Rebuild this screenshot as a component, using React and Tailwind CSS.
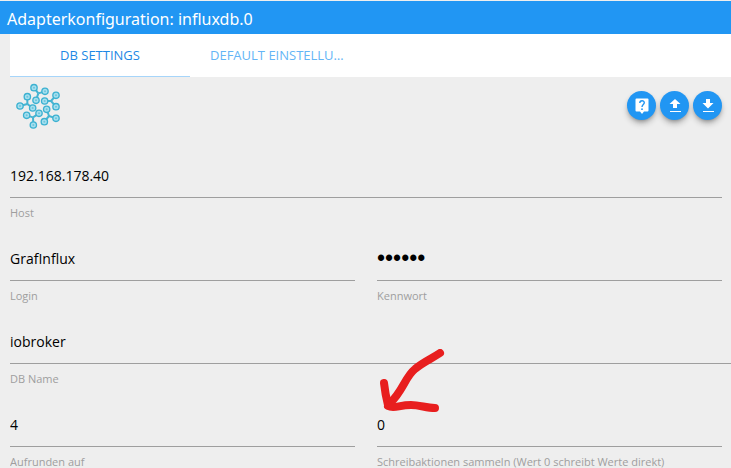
import React, { useState } from 'react';

const LOGO_GROUPS = [
  { center: [115, 52], nodes: [[102, 35], [135, 46], [108, 73]] },
  { center: [153, 75], nodes: [[168, 58], [134, 75], [168, 92]] },
  { center: [147, 120], nodes: [[140, 100], [168, 127], [133, 137]] },
  { center: [99, 124], nodes: [[80, 118], [117, 112], [100, 147]] },
  { center: [82, 84], nodes: [[82, 62], [60, 90], [98, 96]] }
];

const Logo = () => (
  <svg className="ml-1 h-12 w-12" viewBox="42 18 144 144" role="img" aria-label="InfluxDB">
    {LOGO_GROUPS.map(({ center, nodes }) => (
      <g key={center.join()}>
        {nodes.map(([x, y]) => (
          <line key={`${x},${y}`} x1={center[0]} y1={center[1]} x2={x} y2={y} stroke="#45b4d2" strokeWidth={6} />
        ))}
        {nodes.map(([x, y]) => (
          <g key={`${x},${y}`}>
            <circle cx={x} cy={y} r={9.5} fill="#a6dfee" stroke="#3cb1d1" strokeWidth={4} />
            <circle cx={x} cy={y} r={3} fill="#6cc5dc" />
          </g>
        ))}
      </g>
    ))}
  </svg>
);

const RoundButton = ({ label, children }) => (
  <button
    type="button"
    aria-label={label}
    className="flex h-[29px] w-[29px] items-center justify-center rounded-full bg-[#2196f3] text-white shadow-md shadow-black/30 hover:bg-[#42a5f5]"
  >
    {children}
  </button>
);

const Field = ({ id, label, type = 'text', value, className = '', children }) => {
  const [text, setText] = useState(value);

  return (
    <div className={`relative flex flex-col ${className}`}>
      <input
        id={id}
        type={type}
        value={text}
        onChange={(e) => setText(e.target.value)}
        className={`h-11 w-full border-b border-[#9e9e9e] bg-transparent text-black outline-none focus:border-[#2196f3] ${
          type === 'password' ? "font-['Liberation_Sans',sans-serif] text-[23px]" : 'text-sm'
        }`}
      />
      <label htmlFor={id} className="mt-[7px] h-4 truncate text-[11px] leading-4 text-[#9e9e9e]">
        {label}
      </label>
      {children}
    </div>
  );
};

// Red hand-drawn arrow pointing at the field value
const Arrow = () => (
  <svg
    className="pointer-events-none absolute -top-[54px] left-0 h-16 w-18"
    viewBox="0 0 72 64"
    fill="none"
    stroke="#e81e1e"
    strokeWidth={8}
    strokeLinecap="round"
    strokeLinejoin="round"
    aria-hidden="true"
  >
    <path d="M63 4C54 10 46 13 38 20C28 28 26 42 13 54" />
    <path d="M7 34C8 43 9 48 11 56" />
    <path d="M11 57C17 60 22 56 34 56C43 56 49 59 58 59" />
  </svg>
);

const App = () => {
  const [tab, setTab] = useState('db');

  return (
    <div className="h-screen overflow-hidden bg-[#eeeeee] font-['Open_Sans','Noto_Sans',sans-serif]">
      <header className="border-t border-[#eeeeee] bg-[#2196f3] px-[7px]">
        <h1 className="pt-1 font-['Noto_Sans',sans-serif] text-base leading-[29px] text-white">
          Adapterkonfiguration: influxdb.0
        </h1>
      </header>

      <nav className="ml-[10px] flex h-[43px] bg-white text-[13px]" role="tablist">
        <button
          type="button"
          role="tab"
          aria-selected={tab === 'db'}
          onClick={() => setTab('db')}
          className={`w-[180px] truncate border-b px-5 pt-0.5 text-[#1e88e5] ${tab === 'db' ? 'border-[#a6d5fa]' : 'border-white'}`}
        >
          DB SETTINGS
        </button>
        <button
          type="button"
          role="tab"
          aria-selected={tab === 'default'}
          onClick={() => setTab('default')}
          className={`w-[180px] truncate border-b px-5 pt-0.5 text-[#64b5f6] ${tab === 'default' ? 'border-[#a6d5fa]' : 'border-white'}`}
        >
          DEFAULT EINSTELLUNGEN
        </button>
      </nav>

      <main className="pr-[9px] pl-[10px]">
        <div className="flex h-[77px] items-start justify-between pt-[5px]">
          <Logo />
          <div className="mt-[9px] flex gap-1">
            <RoundButton label="Hilfe">
              <svg className="h-[18px] w-[18px]" viewBox="0 0 18 18" fill="none">
                <path d="M3.500 1.500h11a1 1 0 0 1 1 1v11a1 1 0 0 1-1 1h-3.500l-2 2.500-2-2.500h-3.500a1 1 0 0 1-1-1v-11a1 1 0 0 1 1-1z" fill="#fff" />
                <path d="M6.800 6c0-3 4.500-3 4.500-.2C11.300 7.500 9 7.700 9 10" stroke="#2196f3" strokeWidth="1.4" />
                <circle cx="9" cy="12.200" r="0.9" fill="#2196f3" />
              </svg>
            </RoundButton>
            <RoundButton label="Hochladen">
              <svg className="h-[18px] w-[18px]" viewBox="0 0 18 18" fill="currentColor">
                <path d="M7 11h4V7h3.500L9 2 3.500 7H7zM4 14h11v1H4z" />
              </svg>
            </RoundButton>
            <RoundButton label="Herunterladen">
              <svg className="h-[18px] w-[18px]" viewBox="0 0 18 18" fill="currentColor">
                <path d="M14.500 6H11V2H7v4H3.500L9 11.500zM4 14h11v1H4z" />
              </svg>
            </RoundButton>
          </div>
        </div>

        <form className="grid grid-cols-2 gap-x-[22px] gap-y-4">
          <Field id="host" label="Host" value="192.168.178.40" className="col-span-2" />
          <Field id="login" label="Login" value="GrafInflux" />
          <Field id="password" label="Kennwort" type="password" value="secret" />
          <Field id="dbname" label="DB Name" value="iobroker" className="col-span-2 -mr-[9px]" />
          <Field id="round" label="Aufrunden auf" value="4" />
          <Field id="buffer" label="Schreibaktionen sammeln (Wert 0 schreibt Werte direkt)" value="0">
            <Arrow />
          </Field>
        </form>
      </main>
    </div>
  );
};

export default App;
